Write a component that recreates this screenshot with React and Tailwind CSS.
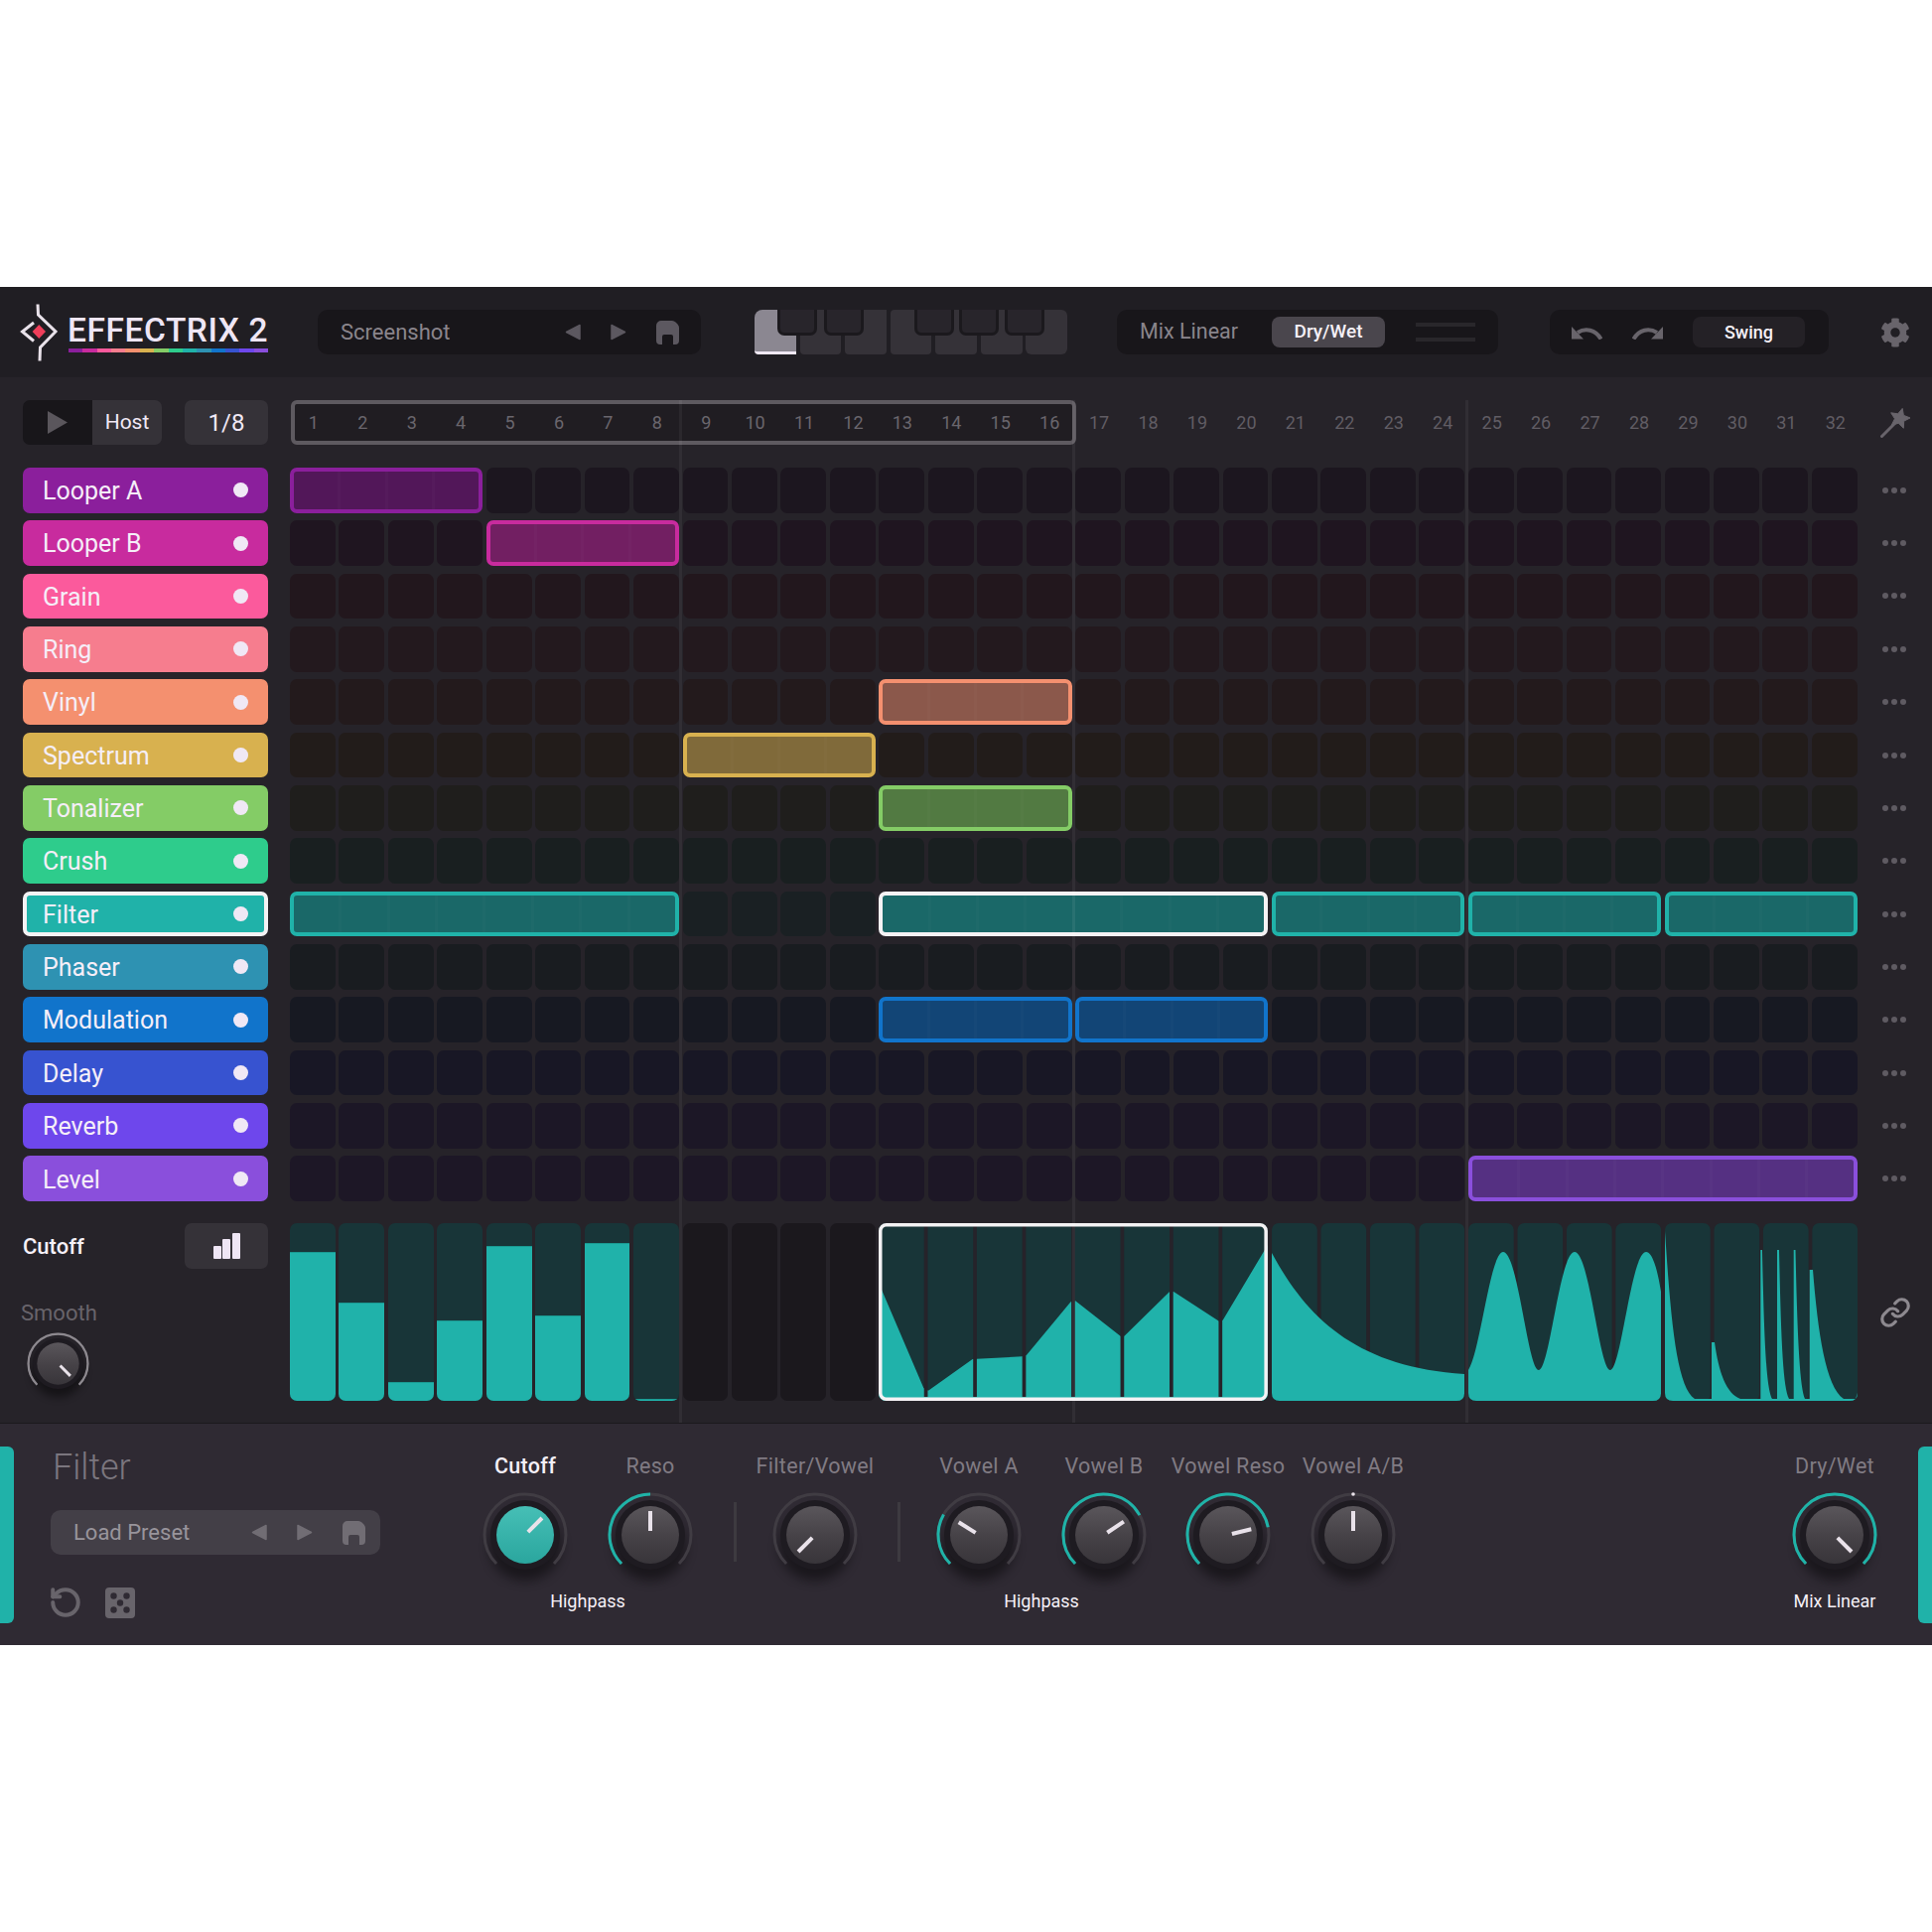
import React from 'react';
import { Link as LinkIcon, RotateCcw } from 'lucide-react';
import { FaCog } from 'react-icons/fa';

const tracks = [
    { name: 'Looper A', color: '#8b1f9c', cell: '#1c161f', fill: '#521759', blocks: { 0: [4] } },
    { name: 'Looper B', color: '#c82b9e', cell: '#1f1520', fill: '#721f62', blocks: { 4: [4] } },
    { name: 'Grain', color: '#fb5a9c', cell: '#22171d', blocks: {} },
    { name: 'Ring', color: '#f67d8e', cell: '#23191e', blocks: {} },
    { name: 'Vinyl', color: '#f4906f', cell: '#231a1c', fill: '#8b584b', blocks: { 12: [4] } },
    { name: 'Spectrum', color: '#d8b14f', cell: '#221c1a', fill: '#806a3a', blocks: { 8: [4] } },
    { name: 'Tonalizer', color: '#84cc66', cell: '#1f1e1c', fill: '#527a42', blocks: { 12: [4] } },
    { name: 'Crush', color: '#2ecc8c', cell: '#191f20', blocks: {} },
    {
        name: 'Filter', color: '#20b2a9', cell: '#1a2023', fill: '#1a6868', selected: true,
        blocks: { 0: [8], 12: [8, true], 20: [4], 24: [4], 28: [4] },
    },
    { name: 'Phaser', color: '#2e92b2', cell: '#191c20', blocks: {} },
    { name: 'Modulation', color: '#1174cb', cell: '#171922', fill: '#124576', blocks: { 12: [4], 16: [4] } },
    { name: 'Delay', color: '#3753d0', cell: '#181725', blocks: {} },
    { name: 'Reverb', color: '#6e47ec', cell: '#1c1726', blocks: {} },
    { name: 'Level', color: '#8a4fdc', cell: '#1d1726', fill: '#553082', blocks: { 24: [8] } },
];

const barValues = [0.836, 0.552, 0.109, 0.455, 0.87, 0.479, 0.889, 0.011];
const stepNumbers = Array.from({ length: 32 }, (_, i) => i + 1);

const polar = (r, deg) => {
    const a = ((deg - 90) * Math.PI) / 180;
    return [50 + r * Math.cos(a), 50 + r * Math.sin(a)];
};

const arcPath = (r, from, to) => {
    const [x1, y1] = polar(r, from);
    const [x2, y2] = polar(r, to);
    return `M${x1} ${y1} A${r} ${r} 0 ${to - from > 180 ? 1 : 0} 1 ${x2} ${y2}`;
};

const Knob = ({ angle, arcFrom, arcTo, teal, dot, arcColor = '#1fb3a8', size = 100 }) => (
    <svg viewBox="0 0 100 100" width={size} height={size} className="block overflow-visible">
        <ellipse cx="50" cy="62" rx="36" ry="34" fill="#000" opacity="0.45" filter="url(#knobBlur)" />
        <path d={arcPath(41, -135, 135)} fill="none" stroke="#403c43" strokeWidth="3" />
        {arcFrom !== undefined && <path d={arcPath(41, arcFrom, arcTo)} fill="none" stroke={arcColor} strokeWidth="3" />}
        {dot && <circle cx="50" cy="9" r="1.8" fill="#e9e2ea" />}
        <circle cx="50" cy="50" r="35" fill="#1e1b21" />
        <circle cx="50" cy="50" r="29" fill={teal ? 'url(#knobTeal)' : 'url(#knobGrey)'} />
        <line x1="50" y1="46" x2="50" y2="26" stroke="#e9e2ea" strokeWidth="4" transform={`rotate(${angle} 50 50)`} />
    </svg>
);

const KnobColumn = ({ label, active, ...knob }) => (
    <div className="w-[100px] flex flex-col items-center">
        <span className={`h-[24px] leading-[24px] text-[21.5px] tracking-[0.3px] whitespace-nowrap ${active ? 'text-[#f5f0f7] font-medium' : 'text-[#807b83]'}`}>{label}</span>
        <div className="mt-[7px]">
            <Knob {...knob} />
        </div>
    </div>
);

const Caption = ({ children }) => (
    <span className="mt-[7px] h-[20px] leading-[20px] text-[18px] text-[#f5f0f7] whitespace-nowrap">{children}</span>
);

const Triangle = ({ flip, color }) => (
    <svg viewBox="0 0 16 17" className={`w-[16px] h-[17px] shrink-0 ${flip ? 'rotate-180' : ''}`}>
        <polygon points="15,1.5 15,15.5 1.5,8.5" fill={color} stroke={color} strokeWidth="1.5" strokeLinejoin="round" />
    </svg>
);

const SaveIcon = ({ color }) => (
    <svg viewBox="0 0 23 24" className="w-[23px] h-[24px] shrink-0">
        <path
            d="M5 0H16Q18 0 19.5 1.5L21.5 3.5Q23 5 23 7V20A4 4 0 0 1 19 24H17V16A2 2 0 0 0 15 14H8A2 2 0 0 0 6 16V24H4A4 4 0 0 1 0 20V5A5 5 0 0 1 5 0Z"
            fill={color}
        />
    </svg>
);

const PresetBox = ({ title, width, bg, textColor, iconColor, pr }) => (
    <div className={`${width} ${bg} ${pr} h-[45px] pl-[23px] rounded-[10px] flex items-center`}>
        <span className={`flex-1 text-[22px] ${textColor}`}>{title}</span>
        <div className="flex items-center gap-[30px]">
            <Triangle color={iconColor} />
            <Triangle color={iconColor} flip />
            <SaveIcon color={iconColor} />
        </div>
    </div>
);

const Keyboard = () => (
    <div className="relative ml-[54px] w-[315px] h-[45px] flex gap-[3.7px]">
        <div className="flex-1 rounded-tl-[8px] rounded-bl-[4px] bg-[#8b8791] border-b-[3px] border-[#f0e8f5]" />
        <div className="flex-1 bg-[#353238] rounded-b-[4px]" />
        <div className="flex-1 bg-[#353238] rounded-b-[4px]" />
        <div className="flex-1 bg-[#353238] rounded-[4px]" />
        <div className="flex-1 bg-[#353238] rounded-b-[4px]" />
        <div className="flex-1 bg-[#353238] rounded-b-[4px]" />
        <div className="flex-1 bg-[#353238] rounded-b-[6px] rounded-tr-[6px]" />
        <div className="absolute top-0 left-[23px] w-[40px] h-[26px] bg-[#28252b] border-[3px] border-t-0 border-[#1b191d] rounded-b-[7px]" />
        <div className="absolute top-0 left-[70px] w-[40px] h-[26px] bg-[#28252b] border-[3px] border-t-0 border-[#1b191d] rounded-b-[7px]" />
        <div className="absolute top-0 left-[161px] w-[40px] h-[26px] bg-[#28252b] border-[3px] border-t-0 border-[#1b191d] rounded-b-[7px]" />
        <div className="absolute top-0 left-[206px] w-[40px] h-[26px] bg-[#28252b] border-[3px] border-t-0 border-[#1b191d] rounded-b-[7px]" />
        <div className="absolute top-0 left-[252px] w-[40px] h-[26px] bg-[#28252b] border-[3px] border-t-0 border-[#1b191d] rounded-b-[7px]" />
    </div>
);

const Logo = () => (
    <div className="ml-[20px] flex items-center">
        <svg viewBox="10 6 38 58" className="w-[38px] h-[58px]">
            <polyline points="24,25 12.5,34 24,43.5" fill="none" stroke="#e9e2ea" strokeWidth="3" />
            <polyline points="28,6.5 28.5,17 46,34 30.5,50 30,63.5" fill="none" stroke="#e9e2ea" strokeWidth="3" />
            <polygon points="29.3,27 36,34 29.3,41 22.6,34" fill="#ef3e5a" />
        </svg>
        <div className="ml-[10px] w-[202px] pt-[2px]">
            <div className="text-[33.5px] leading-[34px] text-[#efe6f5] font-medium tracking-[0.55px] whitespace-nowrap">EFFECTRIX 2</div>
            <div className="mt-[1px] ml-[1px] h-[4px] flex">
                {tracks.map((t) => (
                    <div key={t.name} className="flex-1" style={{ background: t.color }} />
                ))}
            </div>
        </div>
    </div>
);

const Header = () => (
    <div className="h-[91px] bg-[#201e23] flex items-center shrink-0">
        <Logo />
        <div className="ml-[50px]">
            <PresetBox title="Screenshot" width="w-[386px]" bg="bg-[#18161a]" textColor="text-[#8a858c]" iconColor="#5c5860" pr="pr-[22px]" />
        </div>
        <Keyboard />
        <div className="ml-[50px] w-[384px] h-[45px] bg-[#18161a] rounded-[10px] flex items-center pl-[23px]">
            <span className="w-[133px] text-[21.5px] text-[#8a858c]">Mix Linear</span>
            <span className="w-[114px] h-[31px] rounded-[8px] bg-[#4a464d] flex items-center justify-center text-[19px] font-medium text-[#f5f0f7]">Dry/Wet</span>
            <div className="ml-[31px] w-[60px] flex flex-col gap-[11px]">
                <div className="h-[4px] bg-[#29272b]" />
                <div className="h-[4px] bg-[#29272b]" />
            </div>
        </div>
        <div className="ml-[52px] w-[281px] h-[45px] bg-[#18161a] rounded-[10px] flex items-center pl-[22px]">
            <svg viewBox="0 0 31 14" className="w-[31px] h-[14px]">
                <path d="M29.5 13.5C24 4 14 2 6 7" fill="none" stroke="#68646b" strokeWidth="4" />
                <polygon points="0,1 0,13.5 12,13.5" fill="#68646b" />
            </svg>
            <svg viewBox="0 0 31 14" className="ml-[30px] w-[31px] h-[14px] -scale-x-100">
                <path d="M29.5 13.5C24 4 14 2 6 7" fill="none" stroke="#68646b" strokeWidth="4" />
                <polygon points="0,1 0,13.5 12,13.5" fill="#68646b" />
            </svg>
            <span className="ml-[30px] w-[113px] h-[31px] rounded-[8px] bg-[#242126] flex items-center justify-center text-[18px] font-medium text-[#f5f0f7]">Swing</span>
        </div>
        <FaCog className="ml-[52px] w-[30px] h-[30px] text-[#68646b]" />
    </div>
);

const Ruler = () => (
    <div className="w-[1578.7px] grid grid-cols-[repeat(32,minmax(0,1fr))] gap-x-[3.7px]">
        <div className="col-span-16 h-[45px] -mr-[3.7px] border-4 border-[#5e5a60] rounded-[6px] bg-[#201d22]">
            <div className="-ml-[4px] w-[787px] h-full grid grid-cols-[repeat(16,minmax(0,1fr))] gap-x-[3.7px] items-center">
                {stepNumbers.slice(0, 16).map((n) => (
                    <span key={n} className="text-center text-[18px] text-[#6a666d]">{n}</span>
                ))}
            </div>
        </div>
        {stepNumbers.slice(16).map((n) => (
            <span key={n} className="h-[45px] flex items-center justify-center text-[18px] text-[#615d64]">{n}</span>
        ))}
    </div>
);

const Block = ({ span, fill, border, selected }) => (
    <div
        className={`rounded-[7px] border-4 overflow-hidden flex ${span === 8 ? 'col-span-8' : 'col-span-4'}`}
        style={{ background: fill, borderColor: selected ? '#f4f2f4' : border }}
    >
        {Array.from({ length: span }, (_, i) => (
            <div key={i} className={`flex-1 ${i < span - 1 ? 'border-r-[3px] border-white/[0.02]' : ''}`} />
        ))}
    </div>
);

const TrackRow = ({ track }) => {
    const items = [];
    for (let i = 0; i < 32; i++) {
        const block = track.blocks[i];
        if (block) {
            items.push(<Block key={i} span={block[0]} selected={block[1]} fill={track.fill} border={track.color} />);
            i += block[0] - 1;
        } else {
            items.push(<div key={i} className="rounded-[7px]" style={{ background: track.cell }} />);
        }
    }
    return (
        <div className="flex h-[45.6px]">
            <div
                className={`w-[247px] rounded-[7px] flex items-center ${track.selected ? 'border-4 border-[#f4f2f4] px-[16px]' : 'px-[20px]'}`}
                style={{ background: track.color }}
            >
                <span className="flex-1 pt-[2px] text-[25px] text-[#f5eef8]">{track.name}</span>
                <span className="w-[15px] h-[15px] rounded-full bg-[#f0e8f5]" />
            </div>
            <div className="ml-[22px] w-[1578.7px] grid grid-cols-[repeat(32,minmax(0,1fr))] gap-x-[3.7px]">{items}</div>
            <div className="ml-[25.3px] w-[24px] flex items-center justify-between">
                <span className="w-[6px] h-[6px] rounded-full bg-[#5f5b62]" />
                <span className="w-[6px] h-[6px] rounded-full bg-[#5f5b62]" />
                <span className="w-[6px] h-[6px] rounded-full bg-[#5f5b62]" />
            </div>
        </div>
    );
};

const cellRects = (count) =>
    Array.from({ length: count }, (_, i) => (
        <rect key={i} x={i * 49.45} y="0" width="45.75" height="179" rx="7" fill="#183538" />
    ));

// rounded bottom of a filled segment, closes the shape back to the left edge
const segmentBase = 'L194 171Q194 179 186 179L8 179Q0 179 0 171Z';

const decayPath = `M0 30C35 95 85 145 194 152${segmentBase}`;
const lfoPath = `M0 148C12 130 22 29 35 29C50 29 60 148 71 148C82 148 92 29 107 29C122 29 132 148 143 148C154 148 164 29 179 29C186 29 191 50 194 69${segmentBase}`;
const pulsePath = `M0 8C6 100 12 165 30 177L47 177L47 120L50 120C54 150 62 172 76 177L96.3 177L96.3 27L98 27C100 120 102 165 108 177L113 177L113 27L115 27C117 120 119 165 125 177L129.7 177L129.7 27L131.5 27C133.5 120 136 165 141 177L145.7 177L145.7 47L149 47C154 110 162 165 180 177L192 177${segmentBase}`;

const Segment = ({ d }) => (
    <svg viewBox="0 0 194.1 179" className="col-span-4 w-full h-full block">
        {cellRects(4)}
        <path d={d} fill="#20b2aa" />
    </svg>
);

const RampSegment = () => (
    <svg viewBox="0 0 391.9 179" className="col-span-8 w-full h-full block">
        <defs>
            <clipPath id="rampClip">
                <rect x="0" y="0" width="391.9" height="179" rx="7" />
            </clipPath>
        </defs>
        <g clipPath="url(#rampClip)">
            <rect x="0" y="0" width="391.9" height="179" fill="#183538" />
            <polygon
                points="0,60 45.3,166 50,168.7 94.6,137 98.9,136.7 144.6,134.3 148.9,133 193.5,79.3 198.2,78.3 243.5,113.7 247.5,113.7 292.8,69.3 297.1,69 342.8,98.7 346.7,97.7 391.9,22 391.9,179 0,179"
                fill="#20b2aa"
            />
            {[1, 2, 3, 4, 5, 6, 7].map((i) => (
                <rect key={i} x={i * 49.45 - 3.7} y="0" width="3.7" height="175" fill="#26232a" />
            ))}
        </g>
        <rect x="1.75" y="1.75" width="388.4" height="175.5" rx="6" fill="none" stroke="#f4f2f4" strokeWidth="3.5" />
    </svg>
);

const AutomationLane = () => (
    <div className="flex h-[179px] mt-[22px]">
        <div className="w-[247px] flex flex-col">
            <div className="flex items-center justify-between h-[46px]">
                <span className="pt-[1px] text-[22px] font-medium text-[#f5f0f7]">Cutoff</span>
                <div className="w-[84px] h-[46px] rounded-[7px] bg-[#353238] flex items-end justify-center gap-[1.5px] pb-[10px]">
                    <span className="w-[8px] h-[13px] rounded-[1px] bg-[#efe6f5]" />
                    <span className="w-[8px] h-[20px] rounded-[1px] bg-[#efe6f5]" />
                    <span className="w-[8px] h-[26px] rounded-[1px] bg-[#efe6f5]" />
                </div>
            </div>
            <span className="mt-[33px] -ml-[2px] h-[24px] leading-[24px] text-[22px] text-[#68646b]">Smooth</span>
            <div className="-ml-[1.5px] mt-[1.5px]">
                <Knob angle={135} arcFrom={-135} arcTo={135} arcColor="#8d898f" size={73} />
            </div>
        </div>
        <div className="ml-[22px] w-[1578.7px] grid grid-cols-[repeat(32,minmax(0,1fr))] gap-x-[3.7px]">
            {barValues.map((v, i) => (
                <div key={i} className="relative rounded-[7px] overflow-hidden bg-[#183538]">
                    <div className="absolute bottom-0 inset-x-0 bg-[#20b2aa] border-t border-[#1a9a92]" style={{ height: `${v * 100}%` }} />
                </div>
            ))}
            <div className="rounded-[7px] bg-[#1b181d]" />
            <div className="rounded-[7px] bg-[#1b181d]" />
            <div className="rounded-[7px] bg-[#1b181d]" />
            <div className="rounded-[7px] bg-[#1b181d]" />
            <RampSegment />
            <Segment d={decayPath} />
            <Segment d={lfoPath} />
            <Segment d={pulsePath} />
        </div>
        <div className="ml-[22px] w-[32px] flex items-center">
            <LinkIcon className="w-[32px] h-[32px] text-[#8d898f]" strokeWidth={2.4} />
        </div>
    </div>
);

const Main = () => (
    <div className="relative h-[1053px] bg-[#262329] pt-[23px] pl-[23px] shrink-0">
        <div className="flex items-center h-[45px]">
            <div className="w-[140px] h-[45px] rounded-[7px] overflow-hidden flex">
                <div className="w-[70px] bg-[#18161a] flex items-center justify-center">
                    <svg viewBox="0 0 20 23" className="w-[20px] h-[23px]">
                        <polygon points="0,0 20,11.5 0,23" fill="#5a565c" />
                    </svg>
                </div>
                <div className="w-[70px] bg-[#353238] flex items-center justify-center text-[21px] text-[#f0e8f5]">Host</div>
            </div>
            <div className="ml-[23px] w-[84px] h-[45px] rounded-[7px] bg-[#353238] flex items-center justify-center text-[24px] text-[#f0e8f5]">1/8</div>
            <div className="ml-[23px]">
                <Ruler />
            </div>
            <svg viewBox="0 0 31 30" className="ml-[22.3px] w-[31px] h-[30px]">
                <line x1="1.5" y1="28.5" x2="15" y2="15" stroke="#68646b" strokeWidth="3" strokeLinecap="round" />
                <polygon
                    points="22.2,0.4 23.4,7.35 30,9.95 23.7,13.2 23.3,20.3 18.2,15.3 11.3,17.1 14.5,10.8 10.7,4.8 17.7,5.8"
                    fill="#68646b"
                    stroke="#68646b"
                    strokeLinejoin="round"
                />
            </svg>
        </div>
        <div className="mt-[23px] flex flex-col gap-[7.76px]">
            {tracks.map((t) => (
                <TrackRow key={t.name} track={t} />
            ))}
        </div>
        <AutomationLane />
        <div className="absolute top-[23px] bottom-0 left-[684.3px] w-[3px] bg-white/[0.05]" />
        <div className="absolute top-[23px] bottom-0 left-[1079.8px] w-[3px] bg-white/[0.05]" />
        <div className="absolute top-[23px] bottom-0 left-[1475.5px] w-[3px] bg-white/[0.05]" />
    </div>
);

const Separator = ({ left }) => <div className={`${left} mt-[48px] w-[3px] h-[60px] bg-[#3d3a40]`} />;

const DevicePanel = () => (
    <div className="h-[224px] bg-[#2f2a33] border-t border-[#1b191d] flex shrink-0 pt-[23px]">
        <div className="w-[14px] h-[178px] rounded-r-[6px] bg-[#20b2a9] shrink-0" />
        <div className="ml-[37px] w-[332px] flex flex-col">
            <span className="h-[40px] leading-[40px] mt-[1px] ml-[2px] text-[36px] font-light text-[#7b767e]">Filter</span>
            <div className="mt-[23px]">
                <PresetBox title="Load Preset" width="w-[332px]" bg="bg-[#433f47]" textColor="text-[#98949b]" iconColor="#716d74" pr="pr-[15px]" />
            </div>
            <div className="mt-[31px] flex items-center">
                <RotateCcw className="w-[34px] h-[34px] text-[#68646b] -ml-[2px]" strokeWidth={2.8} />
                <svg viewBox="0 0 30 31" className="ml-[23px] w-[30px] h-[31px]">
                    <rect width="30" height="31" rx="4" fill="#68646b" />
                    <circle cx="8.5" cy="8.5" r="3.2" fill="#2f2a33" />
                    <circle cx="21.5" cy="8.5" r="3.2" fill="#2f2a33" />
                    <circle cx="15" cy="15.5" r="3.2" fill="#2f2a33" />
                    <circle cx="8.5" cy="22.5" r="3.2" fill="#2f2a33" />
                    <circle cx="21.5" cy="22.5" r="3.2" fill="#2f2a33" />
                </svg>
            </div>
        </div>
        <div className="ml-[96px] pt-[8px] flex">
            <div className="flex flex-col items-center">
                <div className="flex gap-[26px]">
                    <KnobColumn label="Cutoff" active teal angle={45} />
                    <KnobColumn label="Reso" angle={0} arcFrom={-135} arcTo={0} />
                </div>
                <Caption>Highpass</Caption>
            </div>
            <Separator left="ml-[34px]" />
            <div className="ml-[29px]">
                <KnobColumn label="Filter/Vowel" angle={-135} />
            </div>
            <Separator left="ml-[33px]" />
            <div className="ml-[29px] flex flex-col items-center">
                <div className="flex gap-[26px]">
                    <KnobColumn label="Vowel A" angle={-58} arcFrom={-135} arcTo={-60} />
                    <KnobColumn label="Vowel B" angle={56} arcFrom={-135} arcTo={61} />
                </div>
                <Caption>Highpass</Caption>
            </div>
            <div className="ml-[25px]">
                <KnobColumn label="Vowel Reso" angle={76} arcFrom={-135} arcTo={79} />
            </div>
            <div className="ml-[26px]">
                <KnobColumn label="Vowel A/B" angle={0} dot />
            </div>
        </div>
        <div className="ml-auto pt-[8px] flex flex-col items-center mr-[34px]">
            <KnobColumn label="Dry/Wet" angle={135} arcFrom={-135} arcTo={135} />
            <Caption>Mix Linear</Caption>
        </div>
        <div className="w-[14px] h-[178px] rounded-l-[6px] bg-[#20b2a9] shrink-0" />
    </div>
);

const App = () => (
    <div className="w-[1946px] h-[1946px] bg-white pt-[289px] font-['Roboto',sans-serif] overflow-hidden">
        <svg className="absolute w-0 h-0">
            <defs>
                <linearGradient id="knobGrey" x1="0" y1="0" x2="0" y2="1">
                    <stop offset="0" stopColor="#5a565b" />
                    <stop offset="0.55" stopColor="#454146" />
                    <stop offset="1" stopColor="#38353a" />
                </linearGradient>
                <linearGradient id="knobTeal" x1="0" y1="0" x2="0" y2="1">
                    <stop offset="0" stopColor="#46bfb6" />
                    <stop offset="1" stopColor="#2aa69e" />
                </linearGradient>
                <filter id="knobBlur" x="-50%" y="-50%" width="200%" height="200%">
                    <feGaussianBlur stdDeviation="6" />
                </filter>
            </defs>
        </svg>
        <Header />
        <Main />
        <DevicePanel />
    </div>
);

export default App;
